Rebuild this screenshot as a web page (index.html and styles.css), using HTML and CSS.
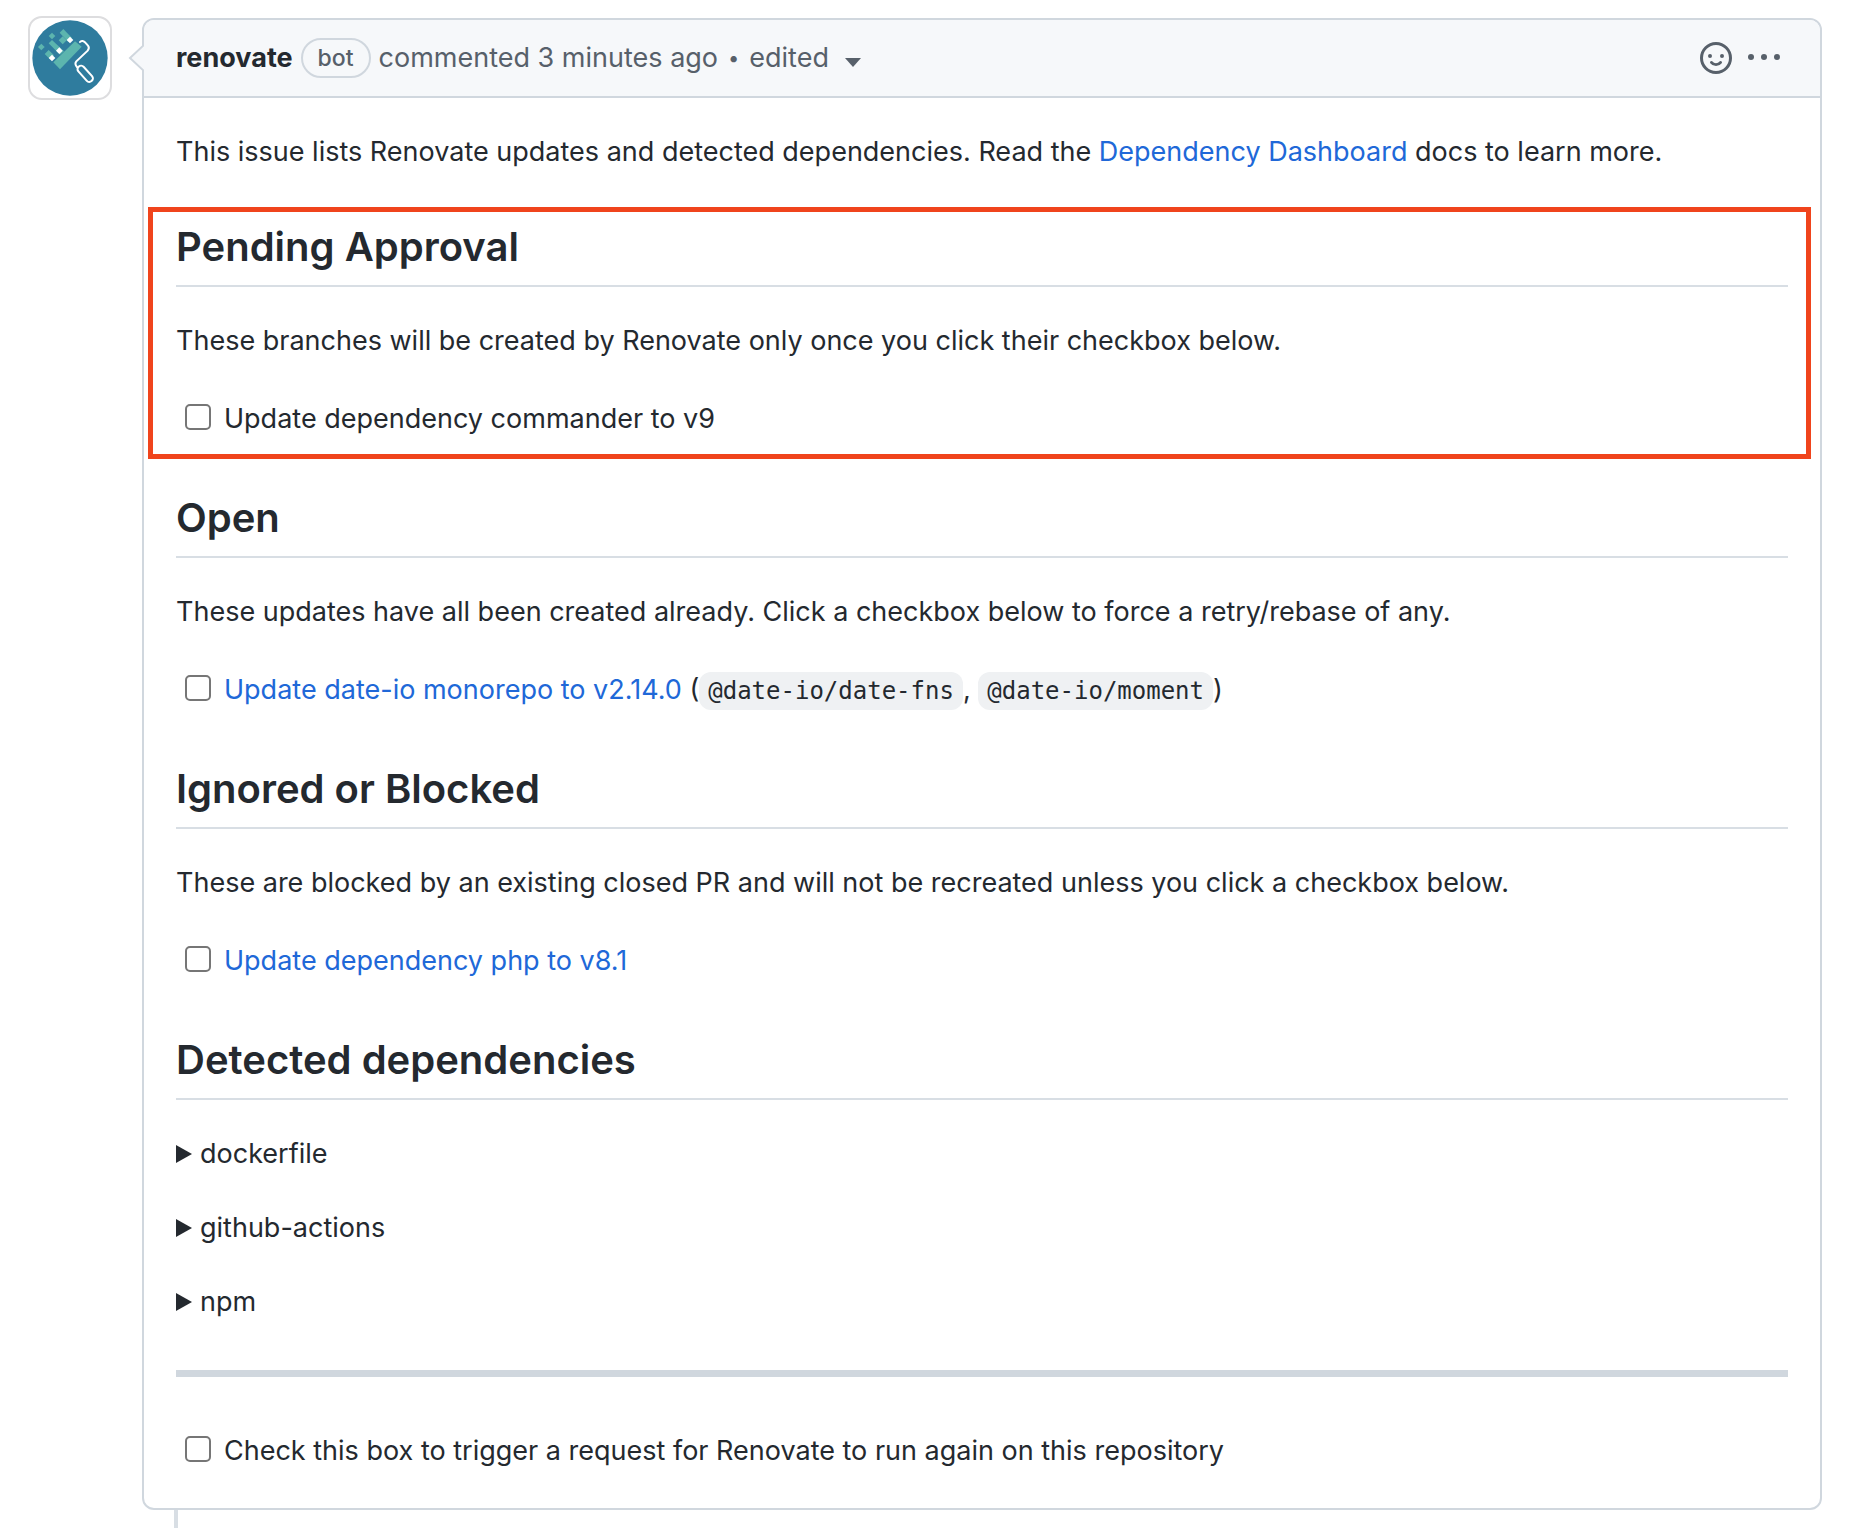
FILE: index.html
```html
<!DOCTYPE html>
<html lang="en">
<head>
<meta charset="utf-8">
<meta name="viewport" content="width=device-width, initial-scale=1">
<title>Dependency Dashboard</title>
<link rel="stylesheet" href="styles.css">
</head>
<body>
<main class="timeline">
  <a class="avatar" href="#" aria-label="renovate">
    <svg class="avatar-image" viewBox="0 0 228 228" aria-hidden="true">
      <circle cx="114" cy="114" r="113" fill="#2f7c9e"/>
      <g fill="#5cb5ae">
        <path d="M129 64 149 80 84 148 64 127Z"/>
        <path d="M94 27 120 54 109 66 83 38Z"/>
        <path d="M60 38 70 48 60 58 50 48Z"/>
        <path d="M28 71 38 81 28 91 18 81Z"/>
        <path d="M60 60 96 94 84 104 50 70Z"/>
        <path d="M92 49 104 61 92 73 80 61Z"/>
        <path d="M50 90 66 106 54 118 38 102Z"/>
      </g>
      <path d="M114 50 124 60 114 70 104 60ZM82 82 92 92 82 102 72 92ZM60 104 70 114 60 124 50 114Z" fill="#fff"/>
      <path d="M144 66c4-6 12-3 16 2l8 9c4 5 3 10-1 15l-34 32c-5 6-4 10 2 17" fill="none" stroke="#fff" stroke-width="6" stroke-linecap="round"/>
      <rect x="131" y="151" width="58" height="21" rx="10" transform="rotate(48 160 161)" fill="none" stroke="#fff" stroke-width="6"/>
    </svg>
  </a>
  <div class="thread">
    <article class="comment">
      <svg class="comment-arrow" viewBox="0 0 16 28" aria-hidden="true"><path d="M16 1 2 14 16 27" fill="#f6f8fa" stroke="#d0d7de" stroke-width="2"/></svg>
      <header class="comment-header">
        <a class="author" href="#">renovate</a>
        <span class="label">bot</span>
        <span class="meta">commented <a href="#">3 minutes ago</a></span>
        <span class="dot">•</span>
        <button class="edited" type="button">edited <span class="caret"></span></button>
        <div class="actions">
          <button class="icon-button" type="button" aria-label="Add reaction">
            <svg width="32" height="32" viewBox="0 0 16 16" fill="currentColor" aria-hidden="true"><path d="M8 0a8 8 0 1 1 0 16A8 8 0 0 1 8 0ZM1.500 8a6.500 6.500 0 1 0 13 0 6.500 6.500 0 0 0-13 0ZM12 7a1 1 0 1 1-2 0 1 1 0 0 1 2 0ZM5 8a1 1 0 1 1 0-2 1 1 0 0 1 0 2Z"/><path d="M5.700 10.200c.5.700 1.300 1.100 2.300 1.100s1.800-.4 2.300-1.100" fill="none" stroke="currentColor" stroke-width="1.400" stroke-linecap="round"/></svg>
          </button>
          <button class="icon-button" type="button" aria-label="Show options">
            <svg width="32" height="32" viewBox="0 0 32 32" fill="currentColor" aria-hidden="true"><circle cx="3" cy="15" r="3"/><circle cx="16" cy="15" r="3"/><circle cx="29" cy="15" r="3"/></svg>
          </button>
        </div>
      </header>
      <div class="comment-body">
        <p>This issue lists Renovate updates and detected dependencies. Read the <a href="#">Dependency Dashboard</a> docs to learn more.</p>
        <section class="section highlighted">
          <h2>Pending Approval</h2>
          <p>These branches will be created by Renovate only once you click their checkbox below.</p>
          <div class="task"><input type="checkbox" id="commander"><label for="commander">Update dependency commander to v9</label></div>
        </section>
        <section class="section">
          <h2>Open</h2>
          <p>These updates have all been created already. Click a checkbox below to force a retry/rebase of any.</p>
          <div class="task"><input type="checkbox" id="date-io"><label for="date-io"><a href="#">Update date-io monorepo to v2.14.0</a> (<code>@date-io/date-fns</code>, <code>@date-io/moment</code>)</label></div>
        </section>
        <section class="section">
          <h2>Ignored or Blocked</h2>
          <p>These are blocked by an existing closed PR and will not be recreated unless you click a checkbox below.</p>
          <div class="task"><input type="checkbox" id="php"><label for="php"><a href="#">Update dependency php to v8.1</a></label></div>
        </section>
        <section class="section">
          <h2>Detected dependencies</h2>
          <div class="managers">
            <details><summary>dockerfile</summary></details>
            <details><summary>github-actions</summary></details>
            <details><summary>npm</summary></details>
          </div>
        </section>
        <hr>
        <div class="task"><input type="checkbox" id="rerun"><label for="rerun">Check this box to trigger a request for Renovate to run again on this repository</label></div>
      </div>
    </article>
    <div class="thread-line"></div>
  </div>
</main>
</body>
</html>
```
FILE: styles.css
```css
* {
  box-sizing: border-box;
}

body {
  margin: 0;
  background: #fff;
  color: #24292f;
  font-family: Inter, "Liberation Sans", sans-serif;
  font-size: 27px;
  line-height: 44px;
}

a {
  color: #2068d8;
  text-decoration: none;
}

button {
  padding: 0;
  border: 0;
  background: none;
  color: inherit;
  font: inherit;
  cursor: pointer;
}

.timeline {
  display: flex;
  align-items: flex-start;
  gap: 30px;
  min-height: 100vh;
  padding: 16px 30px 0 28px;
}

.avatar {
  display: flex;
  flex: none;
  padding: 2px;
  border: 2px solid #dddddf;
  border-radius: 14px;
}

.avatar-image {
  width: 76px;
  height: 76px;
}

.thread {
  display: flex;
  flex: 1;
  flex-direction: column;
  align-self: stretch;
  min-width: 0;
  padding-top: 2px;
}

.comment {
  position: relative;
  border: 2px solid #d0d7de;
  border-radius: 12px;
}

.comment-arrow {
  position: absolute;
  top: 24px;
  left: -16px;
  width: 16px;
  height: 28px;
}

.comment-header {
  display: flex;
  align-items: center;
  gap: 8px;
  padding: 16px 40px 16px 32px;
  border-bottom: 2px solid #d0d7de;
  border-radius: 10px 10px 0 0;
  background: #f6f8fa;
  color: #57606a;
}

.author {
  color: #24292f;
  font-weight: 700;
}

.label {
  padding: 0 15px;
  border: 2px solid #d0d7de;
  border-radius: 20px;
  font-size: 23px;
  font-weight: 500;
  line-height: 36px;
}

.meta a {
  color: inherit;
}

.dot {
  padding: 0 2px;
  font-size: 20px;
}

.edited {
  display: flex;
  align-items: center;
  gap: 16px;
}

.caret {
  margin-top: 8px;
  border: 8px solid transparent;
  border-top: 9px solid #57606a;
  border-bottom: 0;
}

.actions {
  display: flex;
  gap: 16px;
  margin-left: auto;
}

.icon-button {
  display: flex;
}

.comment-body {
  padding: 32px 32px 33px;
}

p {
  margin: 0 0 30px;
}

.section {
  position: relative;
  margin-top: 48px;
}

p + .section {
  margin-top: 46px;
}

.highlighted::after {
  content: "";
  position: absolute;
  inset: -13px -23px -16px -28px;
  border: 5px solid #f0441c;
  pointer-events: none;
}

h2 {
  margin: 0 0 32px;
  padding: 1px 0 12px;
  border-bottom: 2px solid #d8dee4;
  font-size: 40px;
  font-weight: 600;
  line-height: 52px;
}

.task {
  display: flex;
  align-items: center;
  gap: 13px;
  min-height: 50px;
  padding-left: 9px;
}

.task label {
  padding-top: 2px;
}

.task input {
  flex: none;
  appearance: none;
  width: 26px;
  height: 26px;
  margin: 0 0 2px;
  border: 2px solid #767676;
  border-radius: 5px;
  background: #fff;
}

.task input:checked {
  background: #2068d8;
}

code {
  padding: 5px 9px;
  border-radius: 12px;
  background: #eff1f3;
  font-family: "DejaVu Sans Mono", monospace;
  font-size: 24px;
  line-height: 28px;
}

.managers {
  display: grid;
  gap: 30px;
  margin-bottom: -2px;
}

summary {
  display: flex;
  align-items: center;
  gap: 8px;
  list-style: none;
  cursor: pointer;
}

summary::before {
  content: "";
  border: 9px solid transparent;
  border-right: 0;
  border-left: 16px solid #24292f;
}

hr {
  height: 7px;
  margin: 48px 0;
  border: 0;
  background: #d0d7de;
}

.thread-line {
  flex: 1;
  width: 4px;
  min-height: 16px;
  margin-left: 32px;
  background: #d8dee4;
}
```
